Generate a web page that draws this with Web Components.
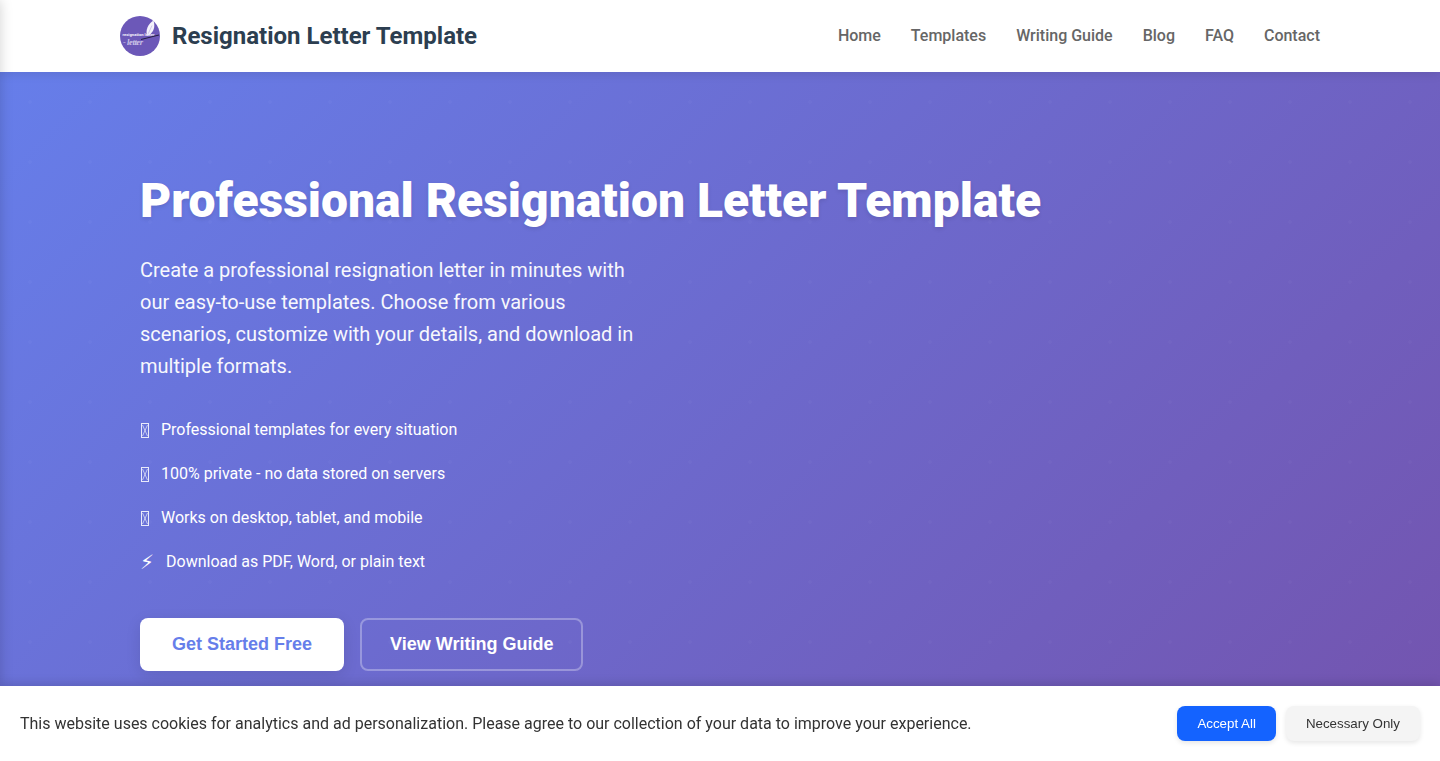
<!DOCTYPE html>
<html lang="en">
<head>
<meta charset="utf-8">
<title>Resignation Letter Template</title>
<style>
  html, body { margin: 0; height: 100%; overflow: hidden; }
  body { font-family: Roboto, "Liberation Sans", sans-serif; background: #fff; }
</style>
</head>
<body>
<site-header>
  <a slot="nav" href="#">Home</a>
  <a slot="nav" href="#">Templates</a>
  <a slot="nav" href="#">Writing Guide</a>
  <a slot="nav" href="#">Blog</a>
  <a slot="nav" href="#">FAQ</a>
  <a slot="nav" href="#">Contact</a>
</site-header>
<hero-section>
  <span slot="title">Professional Resignation Letter Template</span>
  <span slot="lead">Create a professional resignation letter in minutes with our easy-to-use templates. Choose from various scenarios, customize with your details, and download in multiple formats.</span>
  <hero-feature icon="missing">Professional templates for every situation</hero-feature>
  <hero-feature icon="missing">100% private - no data stored on servers</hero-feature>
  <hero-feature icon="missing">Works on desktop, tablet, and mobile</hero-feature>
  <hero-feature icon="⚡&#xFE0E;">Download as PDF, Word, or plain text</hero-feature>
  <hero-button slot="actions" kind="solid">Get Started Free</hero-button>
  <hero-button slot="actions" kind="ghost">View Writing Guide</hero-button>
</hero-section>
<side-drawer></side-drawer>
<cookie-bar>This website uses cookies for analytics and ad personalization. Please agree to our collection of your data to improve your experience.</cookie-bar>
<script>
;(() => {
  // the box a browser draws for a glyph its fonts don't have
  const MISSING_GLYPH = `<svg viewBox="0 0 9 16" width="9" height="16" aria-hidden="true" focusable="false">
    <rect x="1.5" y="1.5" width="7" height="14" fill="none" stroke="#fff" stroke-opacity=".85"/>
    <path d="M2.5 3 L7.5 14 M7.5 3 L2.5 14" fill="none" stroke="#fff" stroke-opacity=".6"/>
  </svg>`

  class SiteHeader extends HTMLElement {
    constructor() {
      super()
      this.attachShadow({ mode: 'open' })
      this.shadowRoot.innerHTML = `
        <style>
          :host {
            display: block;
            height: 72px;
            background: #fff;
            position: relative;
            z-index: 2;
            box-shadow: 0 2px 10px rgba(0, 0, 0, 0.1);
          }
          .wrap {
            box-sizing: border-box;
            width: 1200px;
            height: 100%;
            margin: 0 auto;
            display: flex;
            align-items: center;
            justify-content: space-between;
          }
          .brand {
            display: flex;
            align-items: center;
            gap: 12px;
            font-size: 24px;
            font-weight: 700;
            color: #2c3e50;
          }
          svg { display: block; width: 40px; height: 40px; }
          nav { display: flex; gap: 30px; padding-bottom: 2px; }
          ::slotted(a) {
            color: #666;
            font-size: 16px;
            font-weight: 500;
            text-decoration: none;
          }
        </style>
        <div class="wrap">
          <div class="brand">
            <svg viewBox="0 0 40 40" aria-hidden="true">
              <circle cx="20" cy="20" r="20" fill="#6c58b8"/>
              <path d="M27 20 C25.5 14 27.5 8.5 33.5 4.5 C35 9 34.5 14 31 17.5 C29.5 18.8 28.5 19.6 27 20 Z" fill="#f4f2fb"/>
              <path d="M27.2 20 L32 9.5" stroke="#a99ad8" stroke-width=".5"/>
              <text x="2.5" y="19.5" textLength="32" lengthAdjust="spacingAndGlyphs" font-family="Roboto" font-size="3.8" font-weight="700" fill="#f3f0fb">resignation letter</text>
              <path d="M21 23.5 L39 19" stroke="#1d1a33" stroke-width=".9"/>
              <text x="3" y="28.5" textLength="20" font-family="Liberation Serif" font-style="italic" font-size="8.5" fill="#e6e0f5" fill-opacity=".8">- letter</text>
            </svg>
            <span>Resignation Letter Template</span>
          </div>
          <nav><slot name="nav"></slot></nav>
        </div>
      `
    }
  }

  class HeroSection extends HTMLElement {
    constructor() {
      super()
      this.attachShadow({ mode: 'open' })
      this.shadowRoot.innerHTML = `
        <style>
          :host {
            display: block;
            height: 689px;
            box-sizing: border-box;
            color: #fff;
            background:
              radial-gradient(circle at 30px 30px, rgba(255, 255, 255, 0.025) 0 1.5px, transparent 2px) 0 0 / 60px 60px,
              linear-gradient(135deg, #667eea 0%, #764ba2 100%) 0 0 / 100% 1100px no-repeat;
          }
          .wrap {
            box-sizing: border-box;
            width: 1200px;
            margin: 0 auto;
            padding: 97px 20px 0;
          }
          h1 {
            margin: 0 0 21px;
            font-size: 48px;
            font-weight: 900;
            line-height: 64px;
            text-shadow: 0 2px 4px rgba(0, 0, 0, 0.1);
          }
          p {
            margin: 0 0 36px;
            width: 500px;
            font-size: 20px;
            line-height: 32px;
            opacity: 0.95;
          }
          .features { display: flex; flex-direction: column; gap: 20px; margin-bottom: 44px; }
          .actions { display: flex; gap: 16px; }
        </style>
        <div class="wrap">
          <h1><slot name="title"></slot></h1>
          <p><slot name="lead"></slot></p>
          <div class="features"><slot></slot></div>
          <div class="actions"><slot name="actions"></slot></div>
        </div>
      `
    }
  }

  class HeroFeature extends HTMLElement {
    constructor() {
      super()
      this.attachShadow({ mode: 'open' })
      const icon = this.getAttribute('icon')
      this.shadowRoot.innerHTML = `
        <style>
          :host {
            display: flex;
            align-items: center;
            gap: 12px;
            font-size: 16px;
            line-height: 24px;
          }
          .icon {
            display: flex;
            font: 20px/24px "DejaVu Sans", sans-serif;
          }
        </style>
        <span class="icon"></span><span><slot></slot></span>
      `
      const el = this.shadowRoot.querySelector('.icon')
      if (icon === 'missing') el.innerHTML = MISSING_GLYPH
      else el.textContent = icon
    }
  }

  class HeroButton extends HTMLElement {
    constructor() {
      super()
      this.attachShadow({ mode: 'open' })
      this.shadowRoot.innerHTML = `
        <style>
          :host { display: block; }
          button {
            display: block;
            box-sizing: border-box;
            height: 53px;
            padding: 0 32px;
            border-radius: 8px;
            border: 0;
            font: 700 18px "Liberation Sans", Arial, sans-serif;
            cursor: pointer;
          }
          :host([kind="solid"]) button {
            background: #fff;
            color: #667eea;
            box-shadow: 0 4px 15px rgba(0, 0, 0, 0.1);
          }
          :host([kind="ghost"]) button {
            padding: 0 28px;
            background: transparent;
            color: #fff;
            border: 2px solid rgba(255, 255, 255, 0.3);
          }
        </style>
        <button type="button"><slot></slot></button>
      `
    }
  }

  // off-canvas menu: only its shadow shows, along the left edge of the window
  class SideDrawer extends HTMLElement {
    constructor() {
      super()
      this.attachShadow({ mode: 'open' })
      this.shadowRoot.innerHTML = `
        <style>
          :host {
            position: fixed;
            top: 0;
            bottom: 0;
            right: 100%;
            width: 280px;
            z-index: 3;
            box-shadow: 0 0 12px rgba(0, 0, 0, 0.18);
          }
        </style>
      `
    }
  }

  class CookieBar extends HTMLElement {
    constructor() {
      super()
      this.attachShadow({ mode: 'open' })
      this.shadowRoot.innerHTML = `
        <style>
          :host {
            position: fixed;
            left: 0;
            right: 0;
            bottom: 0;
            z-index: 4;
            height: 75px;
            box-sizing: border-box;
            padding: 0 20px;
            display: flex;
            align-items: center;
            justify-content: space-between;
            background: #fff;
            color: #333;
            font-size: 16px;
            box-shadow: 0 -2px 10px rgba(0, 0, 0, 0.15);
          }
          .buttons { display: flex; gap: 10px; }
          button {
            height: 35px;
            padding: 0 20px;
            border: 0;
            border-radius: 8px;
            font: 13.33px "Liberation Sans", Arial, sans-serif;
            box-shadow: 0 2px 5px rgba(0, 0, 0, 0.1);
            cursor: pointer;
          }
          .accept { background: #1463ff; color: #fff; }
          .necessary { background: #f4f4f4; color: #333; }
        </style>
        <span><slot></slot></span>
        <div class="buttons">
          <button type="button" class="accept">Accept All</button>
          <button type="button" class="necessary">Necessary Only</button>
        </div>
      `
    }
  }

  customElements.define('site-header', SiteHeader)
  customElements.define('hero-section', HeroSection)
  customElements.define('hero-feature', HeroFeature)
  customElements.define('hero-button', HeroButton)
  customElements.define('side-drawer', SideDrawer)
  customElements.define('cookie-bar', CookieBar)
})()
</script>
</body>
</html>
